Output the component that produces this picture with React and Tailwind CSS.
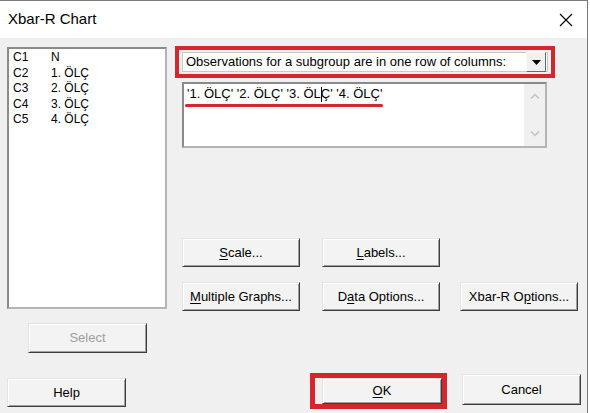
import React from 'react';

const FONT = { fontFamily: "'Liberation Sans', Arial, sans-serif" };

// raised windows button look
const BTN =
  'flex items-center justify-center bg-[#f3f3f3] border border-t-[#e3e3e3] border-l-[#e3e3e3] border-r-[#3c3c3c] border-b-[#3c3c3c] shadow-[inset_1px_1px_0_#ffffff,inset_-1px_-1px_0_#a0a0a0] text-[13px]';

function Btn({ children, className = '', disabled = false }) {
  return (
    <button className={`${BTN} ${disabled ? 'text-[#a0a0a0]' : 'text-black'} ${className}`}>
      {children}
    </button>
  );
}

const COLUMNS = [
  ['C1', 'N'],
  ['C2', '1. ÖLÇ'],
  ['C3', '2. ÖLÇ'],
  ['C4', '3. ÖLÇ'],
  ['C5', '4. ÖLÇ'],
];

export default function App() {
  return (
    <div className="w-[590px] h-[413px] flex bg-white overflow-hidden" style={FONT}>
      <div className="w-[588px] h-[413px] flex flex-col border-t border-r border-[#7a7a7a] bg-[#f0f0f0]">
        {/* Title bar */}
        <div className="h-[37px] bg-white flex items-center justify-between pl-[8px] pr-[14px] shrink-0">
          <span className="text-[15px] text-black">Xbar-R Chart</span>
          <svg width="14" height="14" viewBox="0 0 14 14">
            <path d="M1 1 L13 13 M13 1 L1 13" stroke="#000" strokeWidth="1.1" />
          </svg>
        </div>

        <div className="flex flex-1">
          {/* Left column */}
          <div className="w-[175px] pl-[7px] flex flex-col shrink-0">
            <div className="mt-[9px] w-[160px] h-[262px] bg-white border-2 border-t-[#8a8a8a] border-l-[#8a8a8a] border-r-[#b4b4b4] border-b-[#b4b4b4] pl-[4px] pt-px text-[12px] leading-[15.6px] text-black">
              {COLUMNS.map(([c, n]) => (
                <div key={c} className="grid grid-cols-[38px_1fr]">
                  <span>{c}</span>
                  <span>{n}</span>
                </div>
              ))}
            </div>
            <Btn disabled className="mt-[14px] ml-[21px] w-[119px] h-[30px]">Select</Btn>
            <Btn className="mt-[25px] w-[119px] h-[29px]">Help</Btn>
          </div>

          {/* Right column */}
          <div className="flex flex-col">
            <div className="mt-[8px] w-[380px] h-[32px] border-4 border-[#d3262e] p-[2px] pl-[3px] pr-[3px]">
              <div className="h-full bg-white border border-[#c8c8c8] flex items-center justify-between pl-[3px] pr-[1px]">
                <span className="text-[13px] text-black">Observations for a subgroup are in one row of columns:</span>
                <div className="w-[20px] h-[20px] bg-[#f0f0f0] border border-t-[#f8f8f8] border-l-[#f8f8f8] border-r-[#6a6a6a] border-b-[#6a6a6a] flex items-center justify-center">
                  <svg width="9" height="5" viewBox="0 0 9 5">
                    <path d="M0 0 H9 L4.5 5 Z" fill="#000" />
                  </svg>
                </div>
              </div>
            </div>

            <div className="relative mt-[4px] ml-[7px] w-[365px] h-[66px] bg-white border-2 border-t-[#8a8a8a] border-l-[#8a8a8a] border-r-[#b4b4b4] border-b-[#b4b4b4] flex">
              <div className="flex-1 pl-[3px] pt-[2px] text-[13px] leading-[16px] text-black whitespace-pre">
                '1. ÖLÇ' '2. ÖLÇ' '3. ÖL<span className="inline-block w-px h-[15px] bg-black align-middle -mr-px"></span>Ç' '4. ÖLÇ'
              </div>
              <div className="w-[21px] bg-[#f0f0f0] flex flex-col items-center justify-between py-[9px]">
                <svg width="10" height="6" viewBox="0 0 10 6">
                  <path d="M1 5.5 L5 1.5 L9 5.5" stroke="#c2c2c2" strokeWidth="1.5" fill="none" />
                </svg>
                <svg width="10" height="6" viewBox="0 0 10 6">
                  <path d="M1 0.5 L5 4.5 L9 0.5" stroke="#c2c2c2" strokeWidth="1.5" fill="none" />
                </svg>
              </div>
              <div className="absolute left-[1px] top-[20px] w-[198px] h-[3px] rounded-full bg-[#d3262e]"></div>
            </div>

            <div className="mt-[90px] ml-[7px] flex gap-[22px]">
              <Btn className="w-[118px] h-[29px]"><span><span className="underline underline-offset-2">S</span>cale...</span></Btn>
              <Btn className="w-[118px] h-[29px]"><span><span className="underline underline-offset-2">L</span>abels...</span></Btn>
            </div>

            <div className="mt-[15px] ml-[7px] flex gap-[22px]">
              <Btn className="w-[118px] h-[29px]"><span><span className="underline underline-offset-2">M</span>ultiple Graphs...</span></Btn>
              <Btn className="w-[118px] h-[29px]"><span>D<span className="underline underline-offset-2">a</span>ta Options...</span></Btn>
              <Btn className="w-[118px] h-[29px] -ml-[2px]"><span>Xbar-R O<span className="underline underline-offset-2">p</span>tions...</span></Btn>
            </div>

            <div className="mt-[62px] ml-[135px] flex items-start gap-[15px]">
              <div className="w-[137px] h-[36px] border-[5px] border-[#d3262e] pl-[7px]">
                <Btn className="w-full h-full"><span><span className="underline underline-offset-2">O</span>K</span></Btn>
              </div>
              <Btn className="mt-[1px] w-[119px] h-[31px]">Cancel</Btn>
            </div>
          </div>
        </div>
      </div>
    </div>
  );
}
